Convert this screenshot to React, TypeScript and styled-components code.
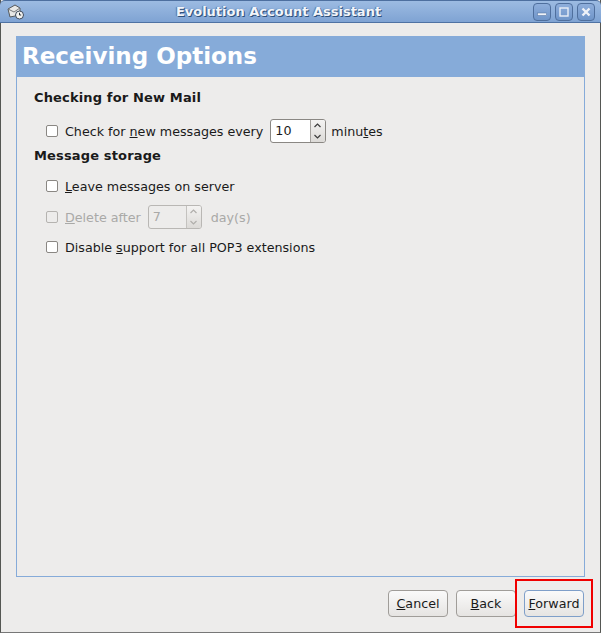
import React from 'react';
import styled, { createGlobalStyle } from 'styled-components';

const GlobalStyle = createGlobalStyle`
  html, body {
    margin: 0;
    padding: 0;
    background: #ffffff;
  }
  body {
    font-family: "DejaVu Sans", sans-serif;
    font-size: 12.7px;
    color: #1a1a1a;
  }
`;

const Page = styled.div`
  width: 602px;
  height: 634px;
  position: relative;
  overflow: hidden;
`;

const Window = styled.div`
  width: 601px;
  height: 633px;
  display: flex;
  flex-direction: column;
  box-sizing: border-box;
  border-left: 1px solid #555753;
  border-right: 1px solid #555753;
  border-bottom: 1px solid #777;
  background: #edeceb;
`;

const TitleBar = styled.div`
  height: 23px;
  flex: none;
  margin: 0 -1px;
  display: flex;
  align-items: center;
  padding: 0 6px 0 7px;
  border-radius: 5px 5px 0 0;
  background: linear-gradient(#9cbbe2, #7fa3d3);
  border-top: 1px solid #4d6f9f;
  border-bottom: 1px solid #4f72a3;
  box-sizing: border-box;
`;

const AppIcon = styled.svg`
  width: 17px;
  height: 17px;
  flex: none;
`;

const Title = styled.div`
  flex: 1;
  text-align: center;
  font-weight: bold;
  font-size: 13px;
  color: #f2f5fa;
  text-shadow: 1px 1px 0 #2f5079, -1px 0 1px #54759f;
`;

const WinButtons = styled.div`
  display: flex;
  gap: 4px;
`;

const WinButton = styled.div`
  width: 18px;
  height: 18px;
  box-sizing: border-box;
  border: 1px solid #4f6f9d;
  border-radius: 4px;
  background: linear-gradient(#8eaedb, #6f95c9);
  display: flex;
  align-items: center;
  justify-content: center;
`;

const Body = styled.div`
  flex: 1;
  display: flex;
  flex-direction: column;
  padding: 13px 15px 15px 15px;
`;

const Panel = styled.div`
  width: 569px;
  height: 541px;
  box-sizing: border-box;
  border: 1px solid #86abd9;
  border-top: none;
`;

const Banner = styled.div`
  height: 41px;
  margin: 0 -1px;
  background: #86abd9;
  color: #ffffff;
  font-weight: bold;
  font-size: 23px;
  line-height: 41px;
  padding-left: 6px;
`;

const Content = styled.div`
  padding: 13px 0 0 17px;
`;

const Heading = styled.div<{ $top?: number }>`
  font-weight: bold;
  font-size: 13px;
  line-height: 16px;
  height: 16px;
  letter-spacing: 0.15px;
  margin-top: ${(p) => p.$top ?? 0}px;
`;

const Row = styled.div<{ $top: number; $disabled?: boolean }>`
  display: flex;
  align-items: center;
  height: 24px;
  margin-top: ${(p) => p.$top}px;
  padding-left: 12px;
  white-space: pre;
  color: ${(p) => (p.$disabled ? '#a9a9a7' : '#1a1a1a')};
`;

const Check = styled.span<{ $disabled?: boolean }>`
  width: 10px;
  height: 10px;
  flex: none;
  margin-right: 7px;
  border: 1px solid ${(p) => (p.$disabled ? '#b5b3b0' : '#8a8783')};
  border-radius: 2px;
  background: ${(p) => (p.$disabled ? '#edeceb' : '#ffffff')};
`;

const Label = styled.span<{ $left?: number }>`
  margin-left: ${(p) => p.$left ?? 0}px;
`;

const Spin = styled.div<{ $width: number; $left: number; $disabled?: boolean }>`
  width: ${(p) => p.$width}px;
  height: 24px;
  margin-left: ${(p) => p.$left}px;
  box-sizing: border-box;
  display: flex;
  border: 1px solid ${(p) => (p.$disabled ? '#b9b7b4' : '#8a8783')};
  border-radius: 3px;
  background: ${(p) => (p.$disabled ? '#edeceb' : '#ffffff')};
  overflow: hidden;
`;

const SpinValue = styled.div`
  flex: 1;
  padding-left: 4px;
  line-height: 22px;
`;

const SpinArrows = styled.div<{ $disabled?: boolean }>`
  width: 14px;
  display: flex;
  flex-direction: column;
  border-left: 1px solid ${(p) => (p.$disabled ? '#c4c2bf' : '#a5a29e')};
  background: linear-gradient(#f4f3f2, #dcdad7);

  svg {
    flex: 1;
    min-height: 0;
  }
`;

const Footer = styled.div`
  display: flex;
  justify-content: flex-end;
  gap: 8px;
  margin-top: 13px;
  padding-right: 1px;
`;

const Button = styled.div<{ $focused?: boolean }>`
  width: 60px;
  height: 27px;
  box-sizing: border-box;
  border: 1px solid ${(p) => (p.$focused ? '#7f9fc9' : '#a09d99')};
  border-radius: 4px;
  background: linear-gradient(#fafafa, #e6e4e2);
  text-align: center;
  line-height: 25px;
`;

const Highlight = styled.div`
  position: absolute;
  left: 515px;
  top: 579px;
  width: 78px;
  height: 49px;
  box-sizing: border-box;
  border: 2px solid #f00000;
`;

const Spinner: React.FC<{ value: string; width: number; left: number; disabled?: boolean }> = ({
  value,
  width,
  left,
  disabled,
}) => {
  const stroke = disabled ? '#b0aeab' : '#3c3c3c';
  return (
    <Spin $width={width} $left={left} $disabled={disabled}>
      <SpinValue>{value}</SpinValue>
      <SpinArrows $disabled={disabled}>
        <svg viewBox="0 0 13 11" width="13">
          <path d="M3.5 7 L6.5 4 L9.5 7" fill="none" stroke={stroke} strokeWidth="1.2" />
        </svg>
        <svg viewBox="0 0 13 11" width="13">
          <path d="M3.5 4 L6.5 7 L9.5 4" fill="none" stroke={stroke} strokeWidth="1.2" />
        </svg>
      </SpinArrows>
    </Spin>
  );
};

const App: React.FC = () => {
  return (
    <Page>
      <GlobalStyle />
      <Window>
        <TitleBar>
          <AppIcon viewBox="0 0 17 17">
            <path d="M1 6 L8 2 L13 5 L13 12 L3 14 Z" fill="#e8e8e6" stroke="#55585a" strokeWidth="1" />
            <path d="M1 6 L7 9 L13 5" fill="none" stroke="#77797b" strokeWidth="1" />
            <circle cx="12.5" cy="12" r="4" fill="#f2f2f0" stroke="#3d4a5c" strokeWidth="1" />
            <path d="M12.5 9.8 V12 H14.2" fill="none" stroke="#2e3436" strokeWidth="1" />
          </AppIcon>
          <Title>Evolution Account Assistant</Title>
          <WinButtons>
            <WinButton>
              <svg width="10" height="10" viewBox="0 0 10 10">
                <rect x="0.5" y="6" width="9" height="2.5" fill="#eef2f8" stroke="#4f6f9d" strokeWidth="0.5" />
              </svg>
            </WinButton>
            <WinButton>
              <svg width="10" height="10" viewBox="0 0 10 10">
                <rect x="1" y="1" width="8" height="8" fill="none" stroke="#e8eef7" strokeWidth="1.4" />
              </svg>
            </WinButton>
            <WinButton>
              <svg width="10" height="10" viewBox="0 0 10 10">
                <path d="M1.5 1.5 L8.5 8.5 M8.5 1.5 L1.5 8.5" stroke="#eef2f8" strokeWidth="2.4" />
              </svg>
            </WinButton>
          </WinButtons>
        </TitleBar>
        <Body>
          <Panel>
            <Banner>Receiving Options</Banner>
            <Content>
              <Heading>Checking for New Mail</Heading>
              <Row $top={13}>
                <Check />
                <Label>Check for <u>n</u>ew messages every</Label>
                <Spinner value="10" width={56} left={7} />
                <Label $left={5}>minu<u>t</u>es</Label>
              </Row>
              <Heading $top={5}>Message storage</Heading>
              <Row $top={10}>
                <Check />
                <Label><u>L</u>eave messages on server</Label>
              </Row>
              <Row $top={7} $disabled>
                <Check $disabled />
                <Label><u>D</u>elete after</Label>
                <Spinner value="7" width={54} left={7} disabled />
                <Label $left={9}>day(s)</Label>
              </Row>
              <Row $top={6}>
                <Check />
                <Label>Disable <u>s</u>upport for all POP3 extensions</Label>
              </Row>
            </Content>
          </Panel>
          <Footer>
            <Button><u>C</u>ancel</Button>
            <Button><u>B</u>ack</Button>
            <Button $focused><u>F</u>orward</Button>
          </Footer>
        </Body>
      </Window>
      <Highlight />
    </Page>
  );
};

export default App;
